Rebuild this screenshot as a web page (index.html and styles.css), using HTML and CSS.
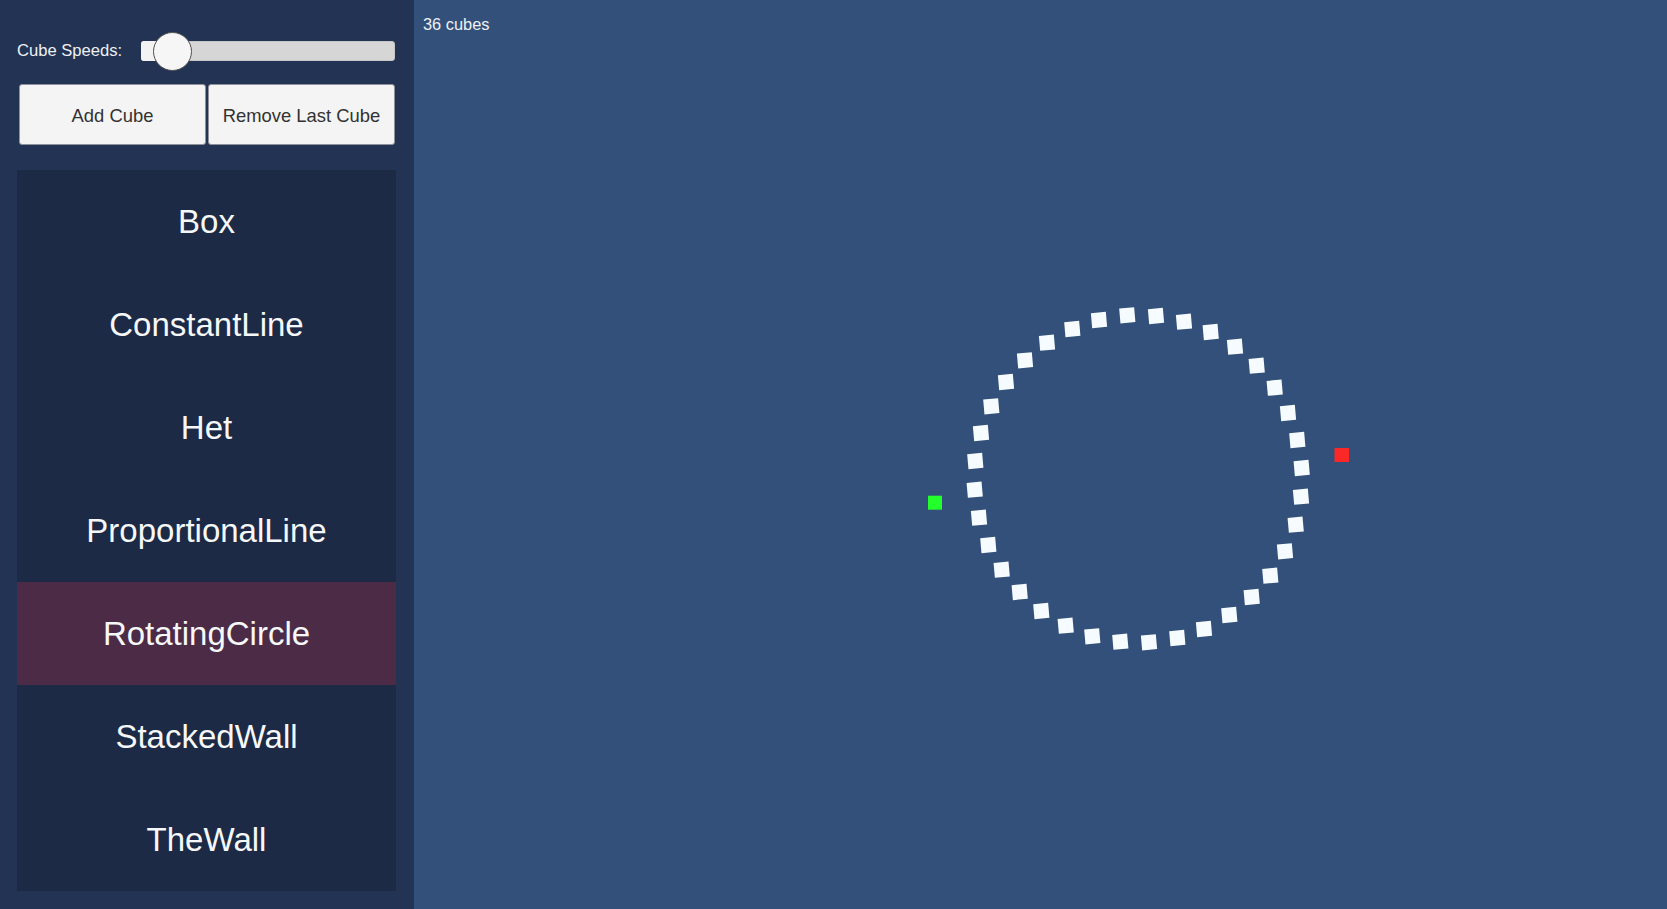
FILE: index.html
```html
<!DOCTYPE html>
<html>
<head>
<meta charset="utf-8">
<link rel="stylesheet" href="styles.css">
</head>
<body>
<div class="app">
  <aside class="sidebar">
    <div class="speed-row">
      <span class="speed-label">Cube Speeds:</span>
      <div class="slider">
        <div class="track"></div>
        <div class="fill"></div>
        <div class="thumb"></div>
      </div>
    </div>
    <div class="btn-row">
      <button class="btn">Add Cube</button>
      <button class="btn">Remove Last Cube</button>
    </div>
    <ul class="scene-list">
      <li class="scene">Box</li>
      <li class="scene">ConstantLine</li>
      <li class="scene">Het</li>
      <li class="scene">ProportionalLine</li>
      <li class="scene selected">RotatingCircle</li>
      <li class="scene">StackedWall</li>
      <li class="scene">TheWall</li>
    </ul>
  </aside>
  <main class="viewport">
    <div class="count">36 cubes</div>
    <svg class="canvas" width="1253" height="909" viewBox="0 0 1253 909">
      <g class="cubes">
        <rect transform="translate(713.3 315.3) rotate(-5)" x="-7.5" y="-7.5" width="15" height="15"/>
        <rect transform="translate(742 316) rotate(-5)" x="-7.5" y="-7.5" width="15" height="15"/>
        <rect transform="translate(770 321.7) rotate(-5)" x="-7.5" y="-7.5" width="15" height="15"/>
        <rect transform="translate(796.7 332) rotate(-5)" x="-7.5" y="-7.5" width="15" height="15"/>
        <rect transform="translate(821 346.7) rotate(-5)" x="-7.5" y="-7.5" width="15" height="15"/>
        <rect transform="translate(842.7 365.7) rotate(-5)" x="-7.5" y="-7.5" width="15" height="15"/>
        <rect transform="translate(860.7 387.7) rotate(-5)" x="-7.5" y="-7.5" width="15" height="15"/>
        <rect transform="translate(874 413) rotate(-5)" x="-7.5" y="-7.5" width="15" height="15"/>
        <rect transform="translate(883.3 440) rotate(-5)" x="-7.5" y="-7.5" width="15" height="15"/>
        <rect transform="translate(887.7 468) rotate(-5)" x="-7.5" y="-7.5" width="15" height="15"/>
        <rect transform="translate(887 496.7) rotate(-5)" x="-7.5" y="-7.5" width="15" height="15"/>
        <rect transform="translate(881.7 524.7) rotate(-5)" x="-7.5" y="-7.5" width="15" height="15"/>
        <rect transform="translate(871 551.3) rotate(-5)" x="-7.5" y="-7.5" width="15" height="15"/>
        <rect transform="translate(856.3 575.7) rotate(-5)" x="-7.5" y="-7.5" width="15" height="15"/>
        <rect transform="translate(837.7 597) rotate(-5)" x="-7.5" y="-7.5" width="15" height="15"/>
        <rect transform="translate(815.3 615) rotate(-5)" x="-7.5" y="-7.5" width="15" height="15"/>
        <rect transform="translate(790 629) rotate(-5)" x="-7.5" y="-7.5" width="15" height="15"/>
        <rect transform="translate(763.3 638) rotate(-5)" x="-7.5" y="-7.5" width="15" height="15"/>
        <rect transform="translate(735 642.3) rotate(-5)" x="-7.5" y="-7.5" width="15" height="15"/>
        <rect transform="translate(706.3 641.7) rotate(-5)" x="-7.5" y="-7.5" width="15" height="15"/>
        <rect transform="translate(678.3 636.3) rotate(-5)" x="-7.5" y="-7.5" width="15" height="15"/>
        <rect transform="translate(651.7 625.7) rotate(-5)" x="-7.5" y="-7.5" width="15" height="15"/>
        <rect transform="translate(627.3 611) rotate(-5)" x="-7.5" y="-7.5" width="15" height="15"/>
        <rect transform="translate(605.7 592) rotate(-5)" x="-7.5" y="-7.5" width="15" height="15"/>
        <rect transform="translate(587.7 569.7) rotate(-5)" x="-7.5" y="-7.5" width="15" height="15"/>
        <rect transform="translate(574.3 545) rotate(-5)" x="-7.5" y="-7.5" width="15" height="15"/>
        <rect transform="translate(565 517.7) rotate(-5)" x="-7.5" y="-7.5" width="15" height="15"/>
        <rect transform="translate(560.7 489.7) rotate(-5)" x="-7.5" y="-7.5" width="15" height="15"/>
        <rect transform="translate(561.3 461) rotate(-5)" x="-7.5" y="-7.5" width="15" height="15"/>
        <rect transform="translate(567 433) rotate(-5)" x="-7.5" y="-7.5" width="15" height="15"/>
        <rect transform="translate(577.3 406.3) rotate(-5)" x="-7.5" y="-7.5" width="15" height="15"/>
        <rect transform="translate(592 382) rotate(-5)" x="-7.5" y="-7.5" width="15" height="15"/>
        <rect transform="translate(611 360.3) rotate(-5)" x="-7.5" y="-7.5" width="15" height="15"/>
        <rect transform="translate(633 342.7) rotate(-5)" x="-7.5" y="-7.5" width="15" height="15"/>
        <rect transform="translate(658.3 329) rotate(-5)" x="-7.5" y="-7.5" width="15" height="15"/>
        <rect transform="translate(685 320) rotate(-5)" x="-7.5" y="-7.5" width="15" height="15"/>
      </g>
      <rect class="marker-green" x="514" y="495.7" width="14" height="14"/>
      <rect class="marker-red" x="920.5" y="448" width="14.5" height="14"/>
    </svg>
  </main>
</div>
</body>
</html>
```

FILE: styles.css
```css
* {
  box-sizing: border-box;
}

html, body {
  margin: 0;
  padding: 0;
  width: 1667px;
  height: 909px;
  overflow: hidden;
}

body {
  font-family: "Liberation Sans", Arial, sans-serif;
}

.app {
  display: flex;
  width: 1667px;
  height: 909px;
}

.sidebar {
  flex: 0 0 414px;
  height: 909px;
  background: #223353;
  padding: 31px 18px 17px 17px;
  display: flex;
  flex-direction: column;
}

.speed-row {
  display: flex;
  align-items: center;
  height: 40px;
}

.speed-label {
  flex: 0 0 124px;
  color: #eef0f4;
  font-size: 16.6px;
  padding-left: 0;
}

.slider {
  position: relative;
  width: 254px;
  height: 20px;
}

.track {
  position: absolute;
  inset: 0;
  background: #d6d6d6;
  border-radius: 3px;
  border: 1px solid #c6c6c6;
}

.fill {
  position: absolute;
  left: 0;
  top: 0;
  width: 31px;
  height: 20px;
  background: #f3f3f3;
  border-radius: 3px 0 0 3px;
}

.thumb {
  position: absolute;
  left: 11.5px;
  top: -9px;
  width: 39px;
  height: 39px;
  border-radius: 50%;
  background: #f6f6f6;
  border: 1.5px solid #505050;
}

.btn-row {
  display: flex;
  gap: 2px;
  padding: 0 1px 0 2px;
  margin-top: 13px;
}

.btn {
  flex: 1 1 0;
  height: 61px;
  background: #f4f4f4;
  border: 1px solid #8e919a;
  border-radius: 3px;
  color: #323232;
  font-family: "Liberation Sans", Arial, sans-serif;
  font-size: 18.4px;
  padding: 2px 0 0 0;
}

.scene-list {
  list-style: none;
  margin: 25px 0 0 0;
  padding: 0;
  background: #1c2a45;
  display: flex;
  flex-direction: column;
}

.scene {
  height: 103px;
  display: flex;
  align-items: center;
  justify-content: center;
  color: #f6f7f9;
  font-size: 33px;
  padding-top: 1px;
}

.scene.selected {
  background: #4b2b46;
}

.viewport {
  position: relative;
  flex: 1 1 auto;
  height: 909px;
  background: #325079;
}

.count {
  position: relative;
  z-index: 1;
  padding: 15px 0 0 9px;
  color: #eef0f4;
  font-size: 16.4px;
}

.canvas {
  position: absolute;
  left: 0;
  top: 0;
}

.cubes rect {
  fill: #f5fbff;
}

.marker-green {
  fill: #22ff2a;
}

.marker-red {
  fill: #fb2828;
}
```
